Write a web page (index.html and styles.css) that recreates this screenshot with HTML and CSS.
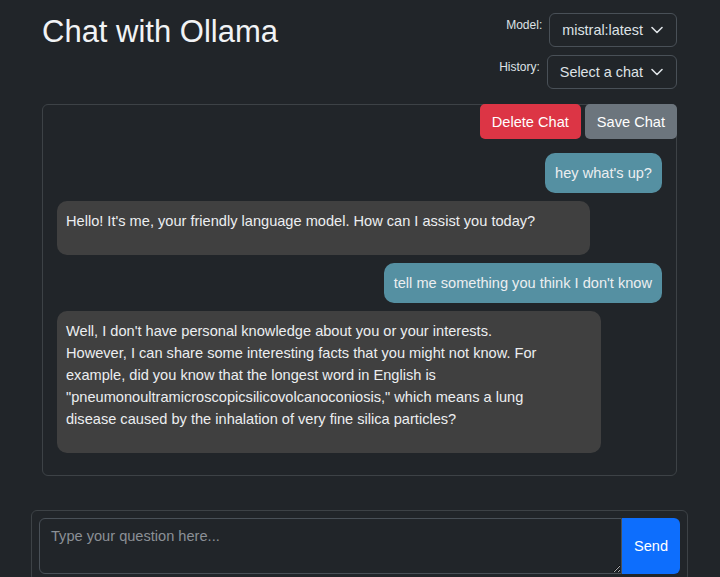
FILE: index.html
```html
<!DOCTYPE html>
<html lang="en">
<head>
<meta charset="utf-8">
<title>Chat with Ollama</title>
<link rel="stylesheet" href="styles.css">
</head>
<body>
<div class="container">
  <header class="header">
    <h1 class="title">Chat with Ollama</h1>
    <div class="controls">
      <div class="control-row">
        <label class="control-label">Model:</label>
        <div class="select">
          <span>mistral:latest</span>
          <svg class="chevron" width="12" height="8" viewBox="0 0 12 8"><path d="M1 1.5 L6 6.5 L11 1.5" fill="none" stroke="#dee2e6" stroke-width="1.6" stroke-linecap="round" stroke-linejoin="round"/></svg>
        </div>
      </div>
      <div class="control-row">
        <label class="control-label">History:</label>
        <div class="select">
          <span>Select a chat</span>
          <svg class="chevron" width="12" height="8" viewBox="0 0 12 8"><path d="M1 1.5 L6 6.5 L11 1.5" fill="none" stroke="#dee2e6" stroke-width="1.6" stroke-linecap="round" stroke-linejoin="round"/></svg>
        </div>
      </div>
    </div>
  </header>

  <section class="chat-box">
    <div class="chat-actions">
      <button class="btn btn-danger">Delete Chat</button>
      <button class="btn btn-secondary">Save Chat</button>
    </div>
    <div class="messages">
      <div class="msg msg-user">hey what's up?</div>
      <div class="msg msg-bot msg-bot-short"><p>Hello! It's me, your friendly language model. How can I assist you today?</p></div>
      <div class="msg msg-user">tell me something you think I don't know</div>
      <div class="msg msg-bot"><p>Well, I don't have personal knowledge about you or your interests. However, I can share some interesting facts that you might not know. For example, did you know that the longest word in English is "pneumonoultramicroscopicsilicovolcanoconiosis," which means a lung disease caused by the inhalation of very fine silica particles?</p></div>
    </div>
  </section>
</div>

<div class="composer-wrap">
  <div class="composer">
    <textarea class="composer-input" placeholder="Type your question here..."></textarea>
    <button class="btn-send">Send</button>
  </div>
</div>
</body>
</html>
```

FILE: styles.css
```css
html, body {
  margin: 0;
  padding: 0;
  overflow: hidden;
}

body {
  background: #212529;
  color: #dee2e6;
  font-family: "Liberation Sans", Arial, sans-serif;
  font-size: 14.6px;
  line-height: 22px;
}

.container {
  padding: 0 43px 0 42px;
}

.header {
  display: flex;
  justify-content: space-between;
  align-items: flex-start;
}

.title {
  margin: 13px 0 0 0;
  font-size: 31px;
  font-weight: 400;
  line-height: 37px;
  color: #f1f3f5;
}

.controls {
  display: flex;
  flex-direction: column;
  align-items: flex-end;
  gap: 8px;
  padding-top: 13px;
}

.control-row {
  display: flex;
  align-items: flex-start;
  gap: 7px;
}

.control-label {
  font-size: 12px;
  line-height: 18px;
  padding-top: 3px;
  color: #dee2e6;
}

.select {
  box-sizing: border-box;
  height: 34px;
  display: flex;
  align-items: center;
  gap: 8px;
  padding: 0 13px 0 12px;
  border: 1px solid #495057;
  border-radius: 6px;
  color: #dee2e6;
  font-size: 14.4px;
}

.chevron {
  display: block;
  flex: none;
}

.chat-box {
  margin-top: 15px;
  border: 1px solid #3d4246;
  border-radius: 6px;
  padding: 0 14px 22px 14px;
}

.chat-actions {
  display: flex;
  justify-content: flex-end;
  gap: 4px;
  margin: -1px -15px 0 0;
}

.btn {
  height: 35px;
  padding: 0 12px;
  border: 0;
  border-radius: 5px;
  color: #fff;
  font-family: inherit;
  font-size: 14.6px;
}

.btn-danger {
  background: #dc3545;
}

.btn-secondary {
  background: #6c757d;
}

.messages {
  display: flex;
  flex-direction: column;
  gap: 8px;
  margin-top: 14px;
}

.msg {
  box-sizing: border-box;
  border-radius: 10px;
  color: #eceef0;
}

.msg-user {
  align-self: flex-end;
  background: #5590a2;
  padding: 9px 10px;
}

.msg-bot {
  align-self: flex-start;
  background: #404040;
  padding: 9px 55px 9px 9px;
  max-width: 544px;
}

.msg-bot p {
  margin: 0 0 14px 0;
}

.composer-wrap {
  padding: 0 32px 0 31px;
  margin-top: 34px;
}

.composer {
  display: flex;
  border: 1px solid #3d4246;
  border-radius: 6px;
  padding: 7px;
}

.composer-input {
  box-sizing: border-box;
  flex: 1;
  height: 56px;
  margin: 0;
  padding: 6px 11px;
  background: #212529;
  color: #dee2e6;
  border: 1px solid #495057;
  border-radius: 6px 0 0 6px;
  font-family: inherit;
  font-size: 14.6px;
  line-height: 22px;
  resize: vertical;
  outline: none;
}

.composer-input::placeholder {
  color: #8b9096;
}

.btn-send {
  width: 58px;
  height: 56px;
  border: 0;
  border-radius: 0 6px 6px 0;
  background: #0d6efd;
  color: #fff;
  font-family: inherit;
  font-size: 14.6px;
}
```
